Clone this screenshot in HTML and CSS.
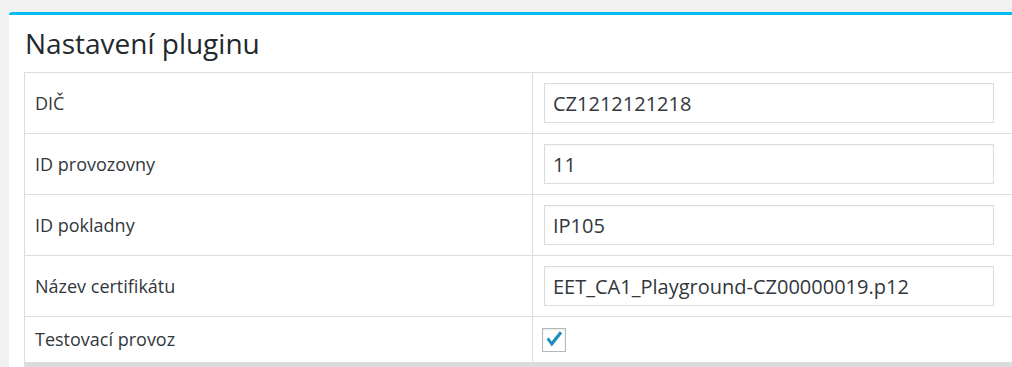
FILE: index.html
```html
<!DOCTYPE html>
<html lang="cs">
<head>
    <meta charset="UTF-8">
    <meta name="viewport" content="width=device-width, initial-scale=1.0">
    <title>Nastavení pluginu</title>
    <link rel="stylesheet" href="styles.css">
</head>
<body>
    <div class="card">
        <h2 class="card-title">Nastavení pluginu</h2>
        <table class="settings">
            <tr>
                <td class="label-cell">DIČ</td>
                <td class="field-cell"><input type="text" class="text-field" value="CZ1212121218"></td>
            </tr>
            <tr>
                <td class="label-cell">ID provozovny</td>
                <td class="field-cell"><input type="text" class="text-field" value="11"></td>
            </tr>
            <tr>
                <td class="label-cell">ID pokladny</td>
                <td class="field-cell"><input type="text" class="text-field" value="IP105"></td>
            </tr>
            <tr>
                <td class="label-cell">Název certifikátu</td>
                <td class="field-cell"><input type="text" class="text-field" value="EET_CA1_Playground-CZ00000019.p12"></td>
            </tr>
            <tr>
                <td class="label-cell">Testovací provoz</td>
                <td class="field-cell">
                    <span class="check-box">
                        <svg width="24" height="24" viewBox="0 0 24 24">
                            <path d="M4.5 11.2 L7 9.4 L9.6 13.4 L17.8 3.2 L20.2 5.2 L9.8 18.6 Z" fill="#1e8cbe"/>
                        </svg>
                    </span>
                </td>
            </tr>
        </table>
    </div>
</body>
</html>
```

FILE: styles.css
```css
body {
    margin: 0;
    padding: 12px 0 0 9px;
    background-color: #f1f1f1;
    font-family: 'Open Sans', 'Noto Sans', sans-serif;
    overflow: hidden;
}
.card {
    background: #ffffff;
    border-top: 3px solid #00bff0;
    border-top-left-radius: 3px;
    padding-left: 15px;
}
.card-title {
    margin: 0;
    padding: 9px 0 9px 1px;
    font-size: 28px;
    line-height: 39px;
    font-weight: 400;
    color: #23282d;
}
.settings {
    border-collapse: collapse;
    width: 100%;
    border: 1px solid #dddddd;
    border-right: none;
    border-bottom: 6px solid #dcdcdc;
}
.settings td {
    border-top: 1px solid #dddddd;
    padding: 10px;
    vertical-align: middle;
}
.label-cell {
    width: 487px;
    font-size: 18px;
    line-height: 25px;
    color: #32373c;
}
.field-cell {
    border-left: 1px solid #dddddd;
    padding-left: 11px !important;
}
.text-field {
    display: block;
    width: 450px;
    height: 40px;
    box-sizing: border-box;
    margin: 0;
    padding: 0 8px;
    border: 1px solid #dddddd;
    box-shadow: inset 0 1px 2px rgba(0, 0, 0, 0.04);
    font-family: 'Open Sans', 'Noto Sans', sans-serif;
    font-size: 20px;
    color: #32373c;
    background: #ffffff;
}
.check-box {
    display: block;
    width: 24px;
    height: 24px;
    box-sizing: border-box;
    margin: 1px 0 0 -2px;
    border: 1px solid #b4b9be;
    box-shadow: inset 0 1px 2px rgba(0, 0, 0, 0.1);
    background: #ffffff;
}
.check-box svg {
    display: block;
    margin: -1px;
}
```
